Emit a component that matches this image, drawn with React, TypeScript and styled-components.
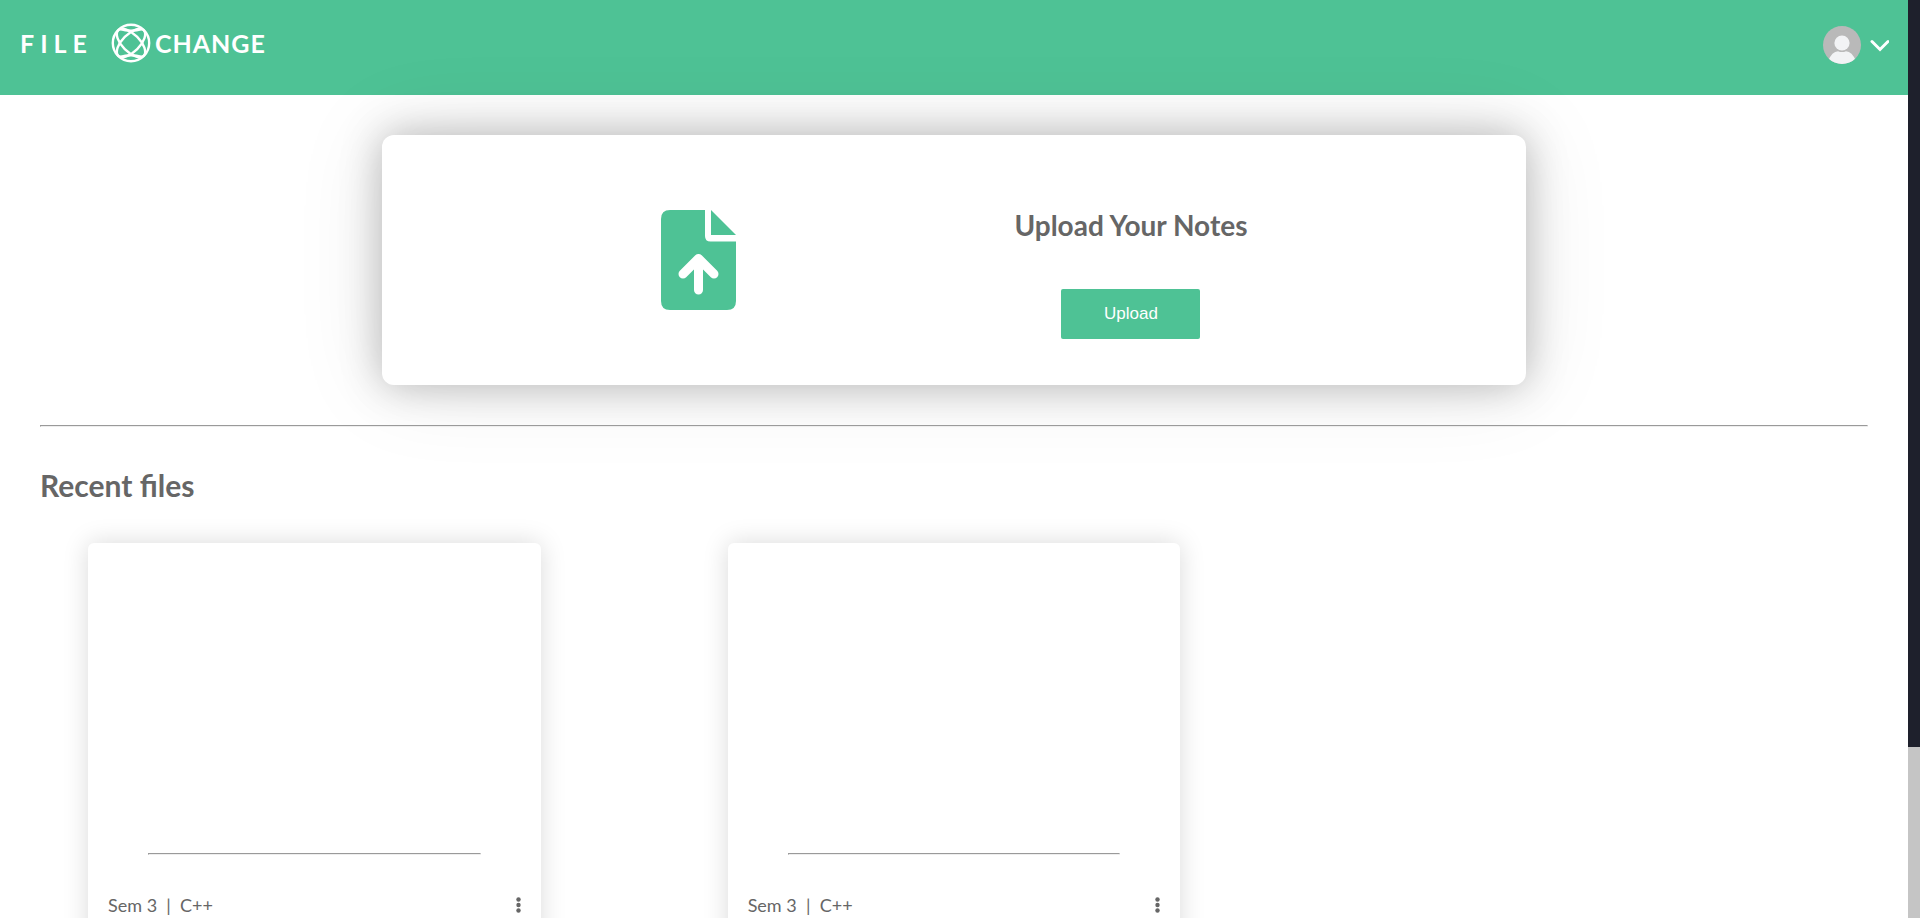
import React from "react";
import styled, { createGlobalStyle } from "styled-components";

const GlobalStyle = createGlobalStyle`
  *, *::before, *::after { box-sizing: border-box; }
  body {
    margin: 0;
    background: #fff;
    color: #666;
    font-family: Lato, "Liberation Sans", sans-serif;
  }
`;

const Shell = styled.div`
  display: grid;
  grid-template-columns: minmax(0, 1fr) 12px;
  height: 100vh;
  overflow: hidden;
`;

const Page = styled.div`
  min-width: 0;
  overflow: hidden;
`;

const ScrollTrack = styled.div`
  background: #c5c5c5;
`;

const ScrollThumb = styled.div`
  height: 81.4%;
  background: #1e202c;
`;

const Header = styled.header`
  display: flex;
  align-items: flex-start;
  justify-content: space-between;
  height: 95px;
  padding: 24px 19px 0 20px;
  background: #4ec295;
`;

const Brand = styled.a`
  display: flex;
  align-items: center;
  height: 38px;
  color: #fff;
  text-decoration: none;
`;

const Word = styled.span<{ $tracking: number }>`
  font-size: 25px;
  line-height: 38px;
  font-weight: 700;
  letter-spacing: ${(p) => p.$tracking}px;
`;

const Orb = styled.svg`
  width: 40px;
  height: 40px;
  margin: 0 4px 0 18px;
`;

const AccountButton = styled.button`
  display: flex;
  align-items: center;
  gap: 8px;
  padding: 2px 0 0;
  border: 0;
  background: none;
  cursor: pointer;
`;

const UploadCard = styled.section`
  display: flex;
  align-items: center;
  justify-content: space-evenly;
  width: 60%;
  height: 250px;
  margin: 40px auto;
  border-radius: 12px;
  background: #fff;
  box-shadow: 0 0 40px rgba(0, 0, 0, 0.25), 0 0 90px rgba(0, 0, 0, 0.1);
`;

const UploadBody = styled.div`
  display: flex;
  flex-direction: column;
  align-items: center;
  gap: 46px;
  padding-top: 26px;
`;

const Title = styled.h2<{ $size: number }>`
  margin: 0;
  color: #666;
  font-size: ${(p) => p.$size}px;
  line-height: 36px;
  font-weight: 700;
`;

const UploadButton = styled.button`
  width: 139px;
  height: 50px;
  border: 0;
  border-radius: 2px;
  background: #4ec295;
  color: #fff;
  font: 17px "Liberation Sans", Arial, sans-serif;
  cursor: pointer;
`;

const Divider = styled.hr<{ $inset: number }>`
  margin: 0 ${(p) => p.$inset}px;
  border: 1px solid;
  border-color: #9a9a9a #eee #eee #9a9a9a;
`;

const Recent = styled.section`
  padding: 40px;
`;

const FileGrid = styled.div`
  display: grid;
  grid-template-columns: repeat(3, minmax(0, 1fr));
  column-gap: 187px;
  padding: 40px 48px;
`;

const FileCard = styled.article`
  border-radius: 6px;
  background: #fff;
  box-shadow: 0 0 26px rgba(0, 0, 0, 0.15);
`;

const Preview = styled.div`
  height: 310px;
`;

const FileMeta = styled.div`
  display: flex;
  align-items: center;
  justify-content: space-between;
  padding: 37px 20px;
  font-size: 18px;
  line-height: 26px;
`;

const MetaText = styled.span`
  white-space: pre;
`;

const MenuButton = styled.button`
  display: flex;
  padding: 0;
  border: 0;
  background: none;
  color: #666;
  cursor: pointer;
`;

const files = [
  { id: 1, semester: "Sem 3", subject: "C++" },
  { id: 2, semester: "Sem 3", subject: "C++" },
];

function Globe() {
  return (
    <Orb viewBox="0 0 40 40" fill="none" stroke="#fff" strokeWidth="2.4" aria-hidden="true">
      <circle cx="20" cy="20" r="18.2" />
      <ellipse cx="20" cy="20" rx="18" ry="8.8" transform="rotate(45 20 20)" />
      <ellipse cx="20" cy="20" rx="18" ry="8.8" transform="rotate(-45 20 20)" />
      <path d="M9 6Q20 9.500 31 6M9 34Q20 30.500 31 34" />
    </Orb>
  );
}

function FileUploadIcon() {
  return (
    <svg width="75" height="100" viewBox="0 0 75 100" aria-hidden="true">
      <path
        fill="#4ec295"
        d="M9 0H44V26Q44 31.500 49.500 31.500H75V91Q75 100 66 100H9Q0 100 0 91V9Q0 0 9 0Z"
      />
      <path fill="#4ec295" d="M50 0L75 25H50Z" />
      <path
        d="M22 64L37.500 48.500L53 64M37.500 50V80"
        fill="none"
        stroke="#fff"
        strokeWidth="9"
        strokeLinecap="round"
        strokeLinejoin="round"
      />
    </svg>
  );
}

function Account() {
  return (
    <AccountButton aria-label="Account menu">
      <svg width="38" height="38" viewBox="0 0 38 38" aria-hidden="true">
        <defs>
          <clipPath id="avatar">
            <circle cx="19" cy="19" r="19" />
          </clipPath>
        </defs>
        <g clipPath="url(#avatar)">
          <rect width="38" height="38" fill="#b9b9b9" />
          <path d="M5 35Q9 25.500 15 25.200Q19 27 23 25.200Q29 25.500 33 35V38H5Z" fill="#f2f3f5" />
          <circle cx="19" cy="17" r="7.600" fill="#f2f3f5" />
        </g>
      </svg>
      <svg width="20" height="20" viewBox="0 0 20 20" fill="none" stroke="#fff" strokeWidth="3" strokeLinecap="round" aria-hidden="true">
        <path d="M3 6.500L11 14.500L19 6.500" />
      </svg>
    </AccountButton>
  );
}

export default function App() {
  return (
    <>
      <GlobalStyle />
      <Shell>
        <Page>
          <Header>
            <Brand href="#">
              <Word $tracking={6}>FILE</Word>
              <Globe />
              <Word $tracking={1}>CHANGE</Word>
            </Brand>
            <Account />
          </Header>
          <main>
            <UploadCard>
              <FileUploadIcon />
              <UploadBody>
                <Title $size={28}>Upload Your Notes</Title>
                <UploadButton>Upload</UploadButton>
              </UploadBody>
            </UploadCard>
            <Divider $inset={40} />
            <Recent>
              <Title $size={30}>Recent files</Title>
              <FileGrid>
                {files.map((file) => (
                  <FileCard key={file.id}>
                    <Preview />
                    <Divider $inset={60} />
                    <FileMeta>
                      <MetaText>{`${file.semester}  |  ${file.subject}`}</MetaText>
                      <MenuButton aria-label="File options">
                        <svg width="5" height="16" viewBox="0 0 5 16" fill="currentColor" aria-hidden="true">
                          <circle cx="2.500" cy="2.500" r="2.200" />
                          <circle cx="2.500" cy="8" r="2.200" />
                          <circle cx="2.500" cy="13.500" r="2.200" />
                        </svg>
                      </MenuButton>
                    </FileMeta>
                  </FileCard>
                ))}
              </FileGrid>
            </Recent>
          </main>
        </Page>
        <ScrollTrack>
          <ScrollThumb />
        </ScrollTrack>
      </Shell>
    </>
  );
}
